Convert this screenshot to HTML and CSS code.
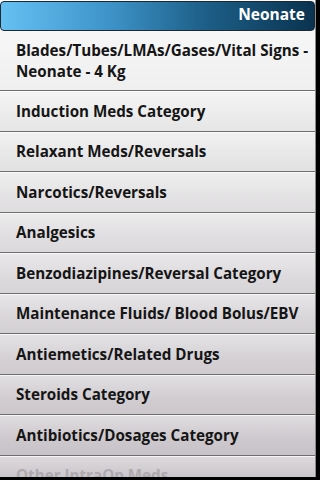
FILE: index.html
```html
<!DOCTYPE html>
<html>
<head>
<meta charset="utf-8">
<link rel="stylesheet" href="styles.css">
</head>
<body>
<div class="screen">
  <div class="page">
    <div class="header"><span class="title">Neonate</span></div>
    <ul class="list">
      <li class="row first">Blades/Tubes/LMAs/Gases/Vital Signs - Neonate - 4 Kg</li>
      <li class="row">Induction Meds Category</li>
      <li class="row">Relaxant Meds/Reversals</li>
      <li class="row">Narcotics/Reversals</li>
      <li class="row">Analgesics</li>
      <li class="row">Benzodiazipines/Reversal Category</li>
      <li class="row">Maintenance Fluids/ Blood Bolus/EBV</li>
      <li class="row">Antiemetics/Related Drugs</li>
      <li class="row">Steroids Category</li>
      <li class="row">Antibiotics/Dosages Category</li>
      <li class="row faded">Other IntraOp Meds</li>
    </ul>
  </div>
</div>
</body>
</html>
```
FILE: styles.css
```css
html, body {
  margin: 0;
  padding: 0;
  background: #000;
}
.screen {
  width: 320px;
  height: 480px;
  overflow: hidden;
  background: #000;
}
.page {
  width: 315px;
  height: 477px;
  overflow: hidden;
  background: linear-gradient(#fbfbfb 0%, #ebebeb 25%, #dcd9dc 60%, #c9c4c9 100%);
  border-right: 1px solid #8a8a8a;
  font-family: "Open Sans", "DejaVu Sans", sans-serif;
  font-weight: 700;
}
.header {
  margin-top: 1px;
  height: 30px;
  width: 315px;
  border: 1px solid #1c2830;
  border-radius: 4px;
  background: linear-gradient(to right, #66c0f2 0%, #3d93c8 35%, #1d5f88 65%, #0a3350 100%);
  display: flex;
  align-items: center;
  justify-content: flex-end;
  padding-right: 9px;
  box-sizing: border-box;
}
.title {
  color: #fff;
  font-size: 15.5px;
  line-height: 1;
  position: relative;
  top: -1px;
}
.list {
  list-style: none;
  margin: 0;
  padding: 0;
}
.row {
  box-sizing: border-box;
  height: 40px;
  border-top: 1px solid #6e6e6e;
  box-shadow: inset 0 1px 0 rgba(255,255,255,0.7);
  background: linear-gradient(rgba(255,255,255,0.35), rgba(255,255,255,0) 60%, rgba(0,0,0,0.02));
  padding: 0 4px 0 16px;
  display: flex;
  align-items: center;
  font-size: 15.2px;
  line-height: 21px;
  color: #151515;
}
.row:nth-child(even) { height: 41px; }
.row.first {
  height: 59px;
  border-top: none;
  box-shadow: none;
  background: none;
  padding-top: 1px;
}
.row.faded {
  color: #aeaaae;
  align-items: flex-start;
  padding-top: 9px;
}
```
